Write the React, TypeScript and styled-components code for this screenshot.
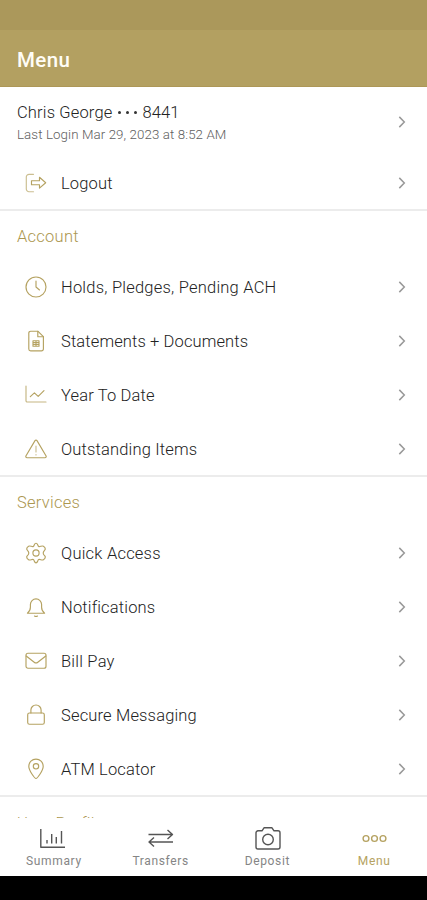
import React from 'react';
import styled, { createGlobalStyle } from 'styled-components';

const GlobalStyle = createGlobalStyle`
  * { box-sizing: border-box; }
  body { margin: 0; background: #000; font-family: Roboto, "Liberation Sans", sans-serif; }
`;

const gold = '#b5a261';

const Screen = styled.div`
  width: 427px;
  height: 900px;
  display: flex;
  flex-direction: column;
  background: #000;
  overflow: hidden;
`;

const StatusBar = styled.div`
  flex: none;
  height: 30px;
  background: #ab985b;
`;

const Header = styled.header`
  flex: none;
  height: 57px;
  padding: 3px 17px 0;
  display: flex;
  align-items: center;
  background: #b3a061;
  border-bottom: 1px solid #ad9757;
`;

const Title = styled.h1`
  margin: 0;
  font-size: 20.5px;
  font-weight: 500;
  letter-spacing: 0.4px;
  color: #fffdf6;
`;

const Content = styled.main`
  flex: none;
  height: 731px;
  overflow: hidden;
  background: #fff;
`;

const Profile = styled.div`
  height: 69px;
  padding: 0 17px;
  display: flex;
  justify-content: space-between;
  align-items: center;
`;

const ProfileText = styled.div`
  padding-top: 4px;
`;

const ProfileName = styled.div`
  display: flex;
  align-items: center;
  font-size: 16.5px;
  font-weight: 300;
  line-height: 23px;
  letter-spacing: 0.15px;
  color: #222;
`;

const Dots = styled.span`
  display: flex;
  gap: 5px;
  margin: 0 5px 0 6px;
`;

const Dot = styled.i`
  width: 3px;
  height: 3px;
  border-radius: 50%;
  background: #333;
`;

const LastLogin = styled.div`
  font-size: 13.3px;
  font-weight: 300;
  line-height: 22px;
  letter-spacing: 0.1px;
  color: #606060;
`;

const Section = styled.section`
  border-bottom: 2px solid #ececec;
`;

const SectionTitle = styled.h2<{ $offset?: number }>`
  margin: 0;
  height: 49px;
  padding: ${p => p.$offset ?? 0}px 0 0 17px;
  font-size: 16.5px;
  line-height: 51px;
  font-weight: 300;
  letter-spacing: 0.25px;
  color: #ac9750;
`;

const Row = styled.div<{ $last?: boolean }>`
  height: ${p => (p.$last ? 53 : 54)}px;
  padding: ${p => (p.$last ? 1 : 0)}px 17px 0 25px;
  display: flex;
  align-items: center;
`;

const RowIcon = styled.svg`
  width: 22px;
  height: 22px;
  fill: none;
  stroke: ${gold};
  stroke-width: 1.15;
  stroke-linecap: round;
  stroke-linejoin: round;
`;

const RowLabel = styled.span<{ $spacing: number }>`
  flex: 1;
  margin-left: 14px;
  padding-top: 2px;
  font-size: 16.5px;
  font-weight: 300;
  line-height: 24px;
  letter-spacing: ${p => p.$spacing}px;
  color: #222;
`;

const Arrow = styled.svg`
  width: 16px;
  height: 16px;
  fill: none;
  stroke: #999;
  stroke-width: 1.5;
`;

const Nav = styled.nav`
  flex: none;
  height: 58px;
  display: grid;
  grid-template-columns: repeat(4, 1fr);
  background: #fff;
`;

const Tab = styled.div<{ $active?: boolean }>`
  display: flex;
  flex-direction: column;
  align-items: center;
  padding-top: 7px;
  color: ${p => (p.$active ? gold : '#555')};
`;

const TabIcon = styled.svg`
  width: 28px;
  height: 28px;
  fill: none;
  stroke: currentColor;
  stroke-width: 1.4;
  stroke-linejoin: round;
`;

const TabLabel = styled.span<{ $active?: boolean }>`
  padding-left: 1px;
  font-size: 12px;
  line-height: 17px;
  letter-spacing: 0.65px;
  color: ${p => (p.$active ? gold : '#858585')};
`;

const Chevron = () => (
  <Arrow viewBox="0 0 16 16"><path d="M5.300 2.900 10.300 8l-5 5.100" /></Arrow>
);

const icons: Record<string, React.ReactNode> = {
  logout: <><path d="M8.500 2.300H4A2.700 2.700 0 0 0 1.300 5v12A2.700 2.700 0 0 0 4 19.700h4.500" opacity=".7" /><path d="M6.500 8.700h8V5.300l6.200 5.400-6.200 5.400v-3.400h-8z" /></>,
  clock: <><circle cx="11" cy="11" r="10" /><path d="M11 5v6l3.500 3" /></>,
  document: <><path d="M12.800 1.200H5.600a1.800 1.800 0 0 0-1.800 1.800v16a1.800 1.800 0 0 0 1.800 1.800h11a1.800 1.800 0 0 0 1.800-1.800V6.700z" /><path d="M12.800 1.200v5.500h5.600M8 10.700h6v5.500H8zM8 12.500h6M8 14.300h6M11 10.700v5.500" /></>,
  chart: <><path d="M1 2v14.800a1.200 1.200 0 0 0 1.200 1.200H21" opacity=".8" /><path d="M5.300 12.600l4.100-3.800 3.800 3.600L19 6.700" /></>,
  warning: <><path d="M10 2.600.9 18a1.200 1.200 0 0 0 1.100 1.700h18a1.200 1.200 0 0 0 1.100-1.700L12 2.600a1.200 1.200 0 0 0-2 0z" /><path d="M11 8v6M11 16.600v.3" opacity=".7" /></>,
  gear: <><path d="M8.300 4.500C9.400 3.900 9.200 1.200 11 1.200s1.600 2.700 2.700 3.300 3.400-1.100 4.700-.3 1.900 1.600 1.900 2.900c0 1.100-2.100 1.600-2.100 3.900s2.100 2.800 2.100 3.900c0 1.300-.6 2.100-1.900 2.900s-3.600-.9-4.700-.3-.9 3.300-2.700 3.300-1.600-2.700-2.700-3.300-3.400 1.100-4.700.3-1.900-1.600-1.900-2.900c0-1.100 2.100-1.600 2.100-3.900S1.700 8.200 1.700 7.100c0-1.300.6-2.100 1.900-2.900s3.600.9 4.700.3z" /><circle cx="11" cy="11" r="3.100" /></>,
  bell: <><path d="M2.400 17.200h17.200c-1.800-1.400-3-3-3-6V8.500a5.600 5.600 0 0 0-11.200 0v2.700c0 3-1.200 4.600-3 6zM9.500 20c1 .7 2 .7 3 0" /></>,
  mail: <><rect x="1" y="3.200" width="20" height="15" rx="2" /><path d="m1.200 6 8 6.200q1.800 1.400 3.600 0l8-6.200" /></>,
  lock: <><rect x="2.700" y="9" width="16.600" height="11.200" rx="1.800" /><path d="M5.900 9V6.100a5.100 5.100 0 0 1 10.200 0V9" /></>,
  pin: <><path d="M11 20.500C9.700 20.500 3.800 12.700 3.800 8.300a7.200 7.200 0 0 1 14.400 0c0 4.400-5.900 12.200-7.200 12.200z" /><circle cx="11" cy="8.300" r="2.700" /></>,
};

interface ItemProps { icon: string; label: string; spacing?: number; last?: boolean }

const MenuRow = ({ icon, label, spacing = 0.16, last }: ItemProps) => (
  <Row $last={last}>
    <RowIcon viewBox="0 0 22 22">{icons[icon]}</RowIcon>
    <RowLabel $spacing={spacing}>{label}</RowLabel>
    <Chevron />
  </Row>
);

const account: ItemProps[] = [
  { icon: 'clock', label: 'Holds, Pledges, Pending ACH', spacing: 0.22 },
  { icon: 'document', label: 'Statements + Documents', spacing: 0.12 },
  { icon: 'chart', label: 'Year To Date' },
  { icon: 'warning', label: 'Outstanding Items', last: true },
];

const services: ItemProps[] = [
  { icon: 'gear', label: 'Quick Access', spacing: 0.22 },
  { icon: 'bell', label: 'Notifications' },
  { icon: 'mail', label: 'Bill Pay', spacing: 0.22 },
  { icon: 'lock', label: 'Secure Messaging' },
  { icon: 'pin', label: 'ATM Locator', last: true },
];

const tabs = [
  { label: 'Summary', icon: <><path d="M1.800 4v18.200H26" /><path d="M8 15v3.500M12.700 9v9.500M17.300 12v6.500M22.500 6v12.500" /></> },
  { label: 'Transfers', icon: <><path d="M2.500 9.500h24M21.500 5l5 4.500-5 4.500M27 17H3M8 12.500 3 17l5 4.500" /></> },
  { label: 'Deposit', icon: <><path d="M5 5.800h4l2-3h8l2 3h4a2 2 0 0 1 2 2V22a2 2 0 0 1-2 2H5a2 2 0 0 1-2-2V7.800a2 2 0 0 1 2-2z" /><circle cx="15" cy="14.500" r="5.300" /></> },
  { label: 'Menu', active: true, icon: <><circle cx="6" cy="13.500" r="2.900" /><circle cx="14.500" cy="13.500" r="2.900" /><circle cx="23" cy="13.500" r="2.900" /></> },
];

export default function App() {
  return (
    <>
      <GlobalStyle />
      <Screen>
        <StatusBar />
        <Header><Title>Menu</Title></Header>
        <Content>
          <Section>
            <Profile>
              <ProfileText>
                <ProfileName>Chris George<Dots><Dot /><Dot /><Dot /></Dots>8441</ProfileName>
                <LastLogin>Last Login Mar 29, 2023 at 8:52 AM</LastLogin>
              </ProfileText>
              <Chevron />
            </Profile>
            <MenuRow icon="logout" label="Logout" last />
          </Section>
          <Section>
            <SectionTitle>Account</SectionTitle>
            {account.map(item => <MenuRow key={item.label} {...item} />)}
          </Section>
          <Section>
            <SectionTitle>Services</SectionTitle>
            {services.map(item => <MenuRow key={item.label} {...item} />)}
          </Section>
          <SectionTitle $offset={1}>User Profile</SectionTitle>
        </Content>
        <Nav>
          {tabs.map(tab => (
            <Tab key={tab.label} $active={tab.active}>
              <TabIcon viewBox="0 0 28 28">{tab.icon}</TabIcon>
              <TabLabel $active={tab.active}>{tab.label}</TabLabel>
            </Tab>
          ))}
        </Nav>
      </Screen>
    </>
  );
}
